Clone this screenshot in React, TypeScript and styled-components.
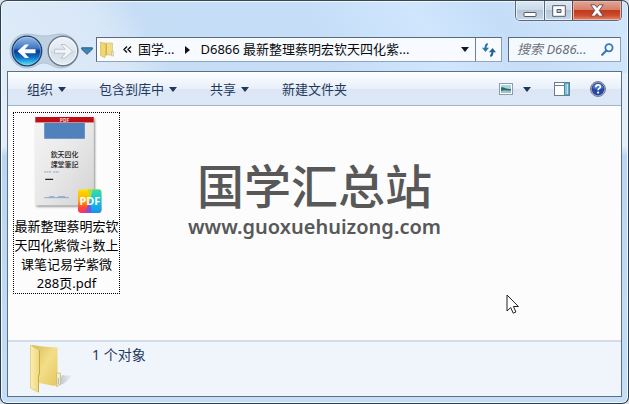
import React from "react";
import styled, { createGlobalStyle } from "styled-components";

const GlobalStyle = createGlobalStyle`
  *, *::before, *::after { box-sizing: border-box; }
  html, body { margin: 0; padding: 0; background: #dfe3e7; }
  body, button, input {
    font-family: "Noto Sans", "Noto Sans CJK SC", sans-serif;
    font-size: 13px;
    line-height: 19px;
  }
  button, input { margin: 0; padding: 0; border: 0; background: none; color: inherit; }
`;

const Window = styled.main`
  display: flex;
  flex-direction: column;
  min-height: 100vh;
  padding: 0 6px 6px;
  border: 1px solid #2c3e4c;
  border-top-color: #3c4650;
  border-radius: 7px;
  box-shadow: inset 0 0 0 1px #eff7ff;
  background:
    linear-gradient(60deg, #dfebf8 0, #d8e7f8 110px, #c6ddf6 150px, #c6ddf8 290px, #cfe6fd 390px, #c6ddf8 460px, #d0e6fc 560px, #cbe1f8 100%) top / 100% 72px no-repeat,
    linear-gradient(180deg, #dfebf7 0, #e3eef9 145px, #bad6f2 155px, #c5def6 100%);
  overflow: hidden;
`;

const TitleBar = styled.header`
  display: flex;
  justify-content: flex-end;
  height: 31px;
`;

const CaptionGroup = styled.div`
  display: flex;
  height: 20px;
  border: 1px solid #59697b;
  border-top: 0;
  border-radius: 0 0 5px 5px;
  overflow: hidden;
  box-shadow: 0 0 2px #ffffff;
`;

const CaptionButton = styled.button<{ $close?: boolean }>`
  display: flex;
  align-items: center;
  justify-content: center;
  width: ${(p) => (p.$close ? 49 : 28)}px;
  background: ${(p) =>
    p.$close
      ? "linear-gradient(180deg, #e5a593 0, #d7806b 45%, #bf3a1e 50%, #cb4a2c 75%, #e8886c 100%)"
      : "linear-gradient(180deg, #dce8f4 0, #cbdae9 45%, #b4c6d8 50%, #c5d8ea 100%)"};
  box-shadow: inset 0 0 0 1px ${(p) => (p.$close ? "#eab5a6" : "#e8f2fb")};
`;

const MiddleButton = styled(CaptionButton)`
  border-left: 1px solid #59697b;
`;

const CloseButton = styled(CaptionButton)`
  border-left: 1px solid #6b3f3f;
`;

const AddressRow = styled.nav`
  display: flex;
  align-items: center;
  height: 39px;
  padding: 0 1px 4px 2px;
`;

const NavCluster = styled.div`
  position: relative;
  display: flex;
  align-items: center;
  flex: none;
  gap: 2px;
  width: 87px;
  padding-top: 2px;
`;

const NavPlate = styled.svg`
  position: absolute;
  left: 0;
  top: 0;
`;

const NavButton = styled.button`
  position: relative;
  display: flex;
  width: 32px;
  height: 32px;
  margin-left: 2px;
`;

const RecentButton = styled.button`
  display: flex;
  width: 12px;
`;

const AddressBox = styled.div`
  display: flex;
  align-items: center;
  flex: 1;
  min-width: 0;
  height: 25px;
  border: 1px solid #6f8191;
  border-color: #596a7a #8d9eae #93a5b5 #596a7a;
  background: #f7fbff;
  color: #0a0a0a;
`;

const CrumbIcon = styled.span`
  display: flex;
  flex: none;
  width: 20px;
  padding-left: 3px;
`;

const Crumb = styled.button`
  white-space: nowrap;
`;

const CrumbArrow = styled.button<{ $wide?: boolean }>`
  display: flex;
  justify-content: center;
  flex: none;
  width: ${(p) => (p.$wide ? 26 : 21)}px;
`;

const AddressTools = styled.div`
  display: flex;
  align-self: stretch;
  flex: none;
  margin-left: auto;
`;

const AddressTool = styled.button<{ $divided?: boolean }>`
  display: flex;
  align-items: center;
  justify-content: center;
  width: ${(p) => (p.$divided ? 26 : 20)}px;
  border-left: ${(p) => (p.$divided ? "1px solid #6f8191" : "0")};
`;

const SearchBox = styled.form`
  display: flex;
  align-items: center;
  flex: none;
  width: 113px;
  height: 25px;
  margin-left: 6px;
  padding: 0 6px 0 8px;
  border: 1px solid #6f8191;
  border-color: #596a7a #8d9eae #93a5b5 #596a7a;
  background: #f3f9ff;
`;

const SearchInput = styled.input`
  flex: 1;
  min-width: 0;
  outline: none;
  &::placeholder { color: #6b6f74; opacity: 1; font-style: italic; }
`;

const SearchButton = styled.button`
  display: flex;
`;

const Client = styled.section`
  display: flex;
  flex-direction: column;
  flex: 1;
  border: 1px solid #5c7186;
  background: #fcfcfc;
`;

const Toolbar = styled.div`
  display: flex;
  align-items: center;
  gap: 33px;
  height: 34px;
  padding: 0 15px 0 19px;
  border-top: 1px solid #ffffff;
  border-bottom: 1px solid #a5b4c6;
  background: linear-gradient(180deg, #fbfdff 0, #e9f0fa 48%, #dce6f4 52%, #dde8f6 100%);
  color: #1e395b;
`;

const ToolButton = styled.button`
  display: flex;
  align-items: center;
  gap: 5px;
  white-space: nowrap;
`;

const ToolIcons = styled.div`
  display: flex;
  align-items: center;
  gap: 20px;
  margin-left: auto;
`;

const IconButton = styled.button`
  display: flex;
  align-items: center;
`;

const ViewButton = styled(IconButton)`
  gap: 10px;
  padding-right: 3px;
`;

const FileArea = styled.div`
  position: relative;
  flex: 1;
  padding: 6px 5px;
`;

const FileItem = styled.a`
  display: flex;
  flex-direction: column;
  align-items: center;
  width: 107px;
  height: 182px;
  padding-top: 3px;
  border: 1px dotted #000000;
  color: #000000;
  text-align: center;
  text-decoration: none;
`;

const FileName = styled.span`
  width: 105px;
  margin-top: 2px;
`;

const Watermark = styled.div`
  position: absolute;
  top: 54px;
  left: 0;
  right: 0;
  color: #585858;
  text-align: center;
  pointer-events: none;
`;

const WatermarkTitle = styled.div`
  font-family: "Noto Sans CJK SC", sans-serif;
  font-size: 47px;
  font-weight: 500;
  line-height: 47px;
`;

const WatermarkUrl = styled.div`
  margin-top: 8px;
  font-size: 20px;
  font-weight: 600;
  line-height: 24px;
`;

const Cursor = styled.svg`
  position: absolute;
  right: 101px;
  bottom: 24px;
  pointer-events: none;
`;

const Details = styled.footer`
  display: flex;
  gap: 18px;
  height: 56px;
  padding: 2px 20px;
  border-top: 2px solid #d3dde8;
  background: #f0f4fb;
  color: #1e395b;
`;

const DetailsText = styled.p`
  margin: 1px 0 0;
  font-size: 14px;
`;

const DownArrow = ({ color = "#1e395b" }: { color?: string }) => (
  <svg width="8" height="5" viewBox="0 0 8 5" aria-hidden="true">
    <path d="M0 0h8L4 5z" fill={color} />
  </svg>
);

const BackIcon = () => (
  <svg width="32" height="32" viewBox="0 0 32 32" aria-hidden="true">
    <defs>
      <linearGradient id="backTop" x1="0" y1="0" x2="0" y2="1">
        <stop offset="0" stopColor="#9dbde2" />
        <stop offset=".4" stopColor="#3f78c4" />
        <stop offset=".5" stopColor="#0a3a92" />
        <stop offset=".72" stopColor="#0b74c8" />
        <stop offset="1" stopColor="#5beafc" />
      </linearGradient>
    </defs>
    <circle cx="16" cy="16" r="14.8" fill="url(#backTop)" stroke="#21406d" strokeWidth="1.2" />
    <circle cx="16" cy="16" r="13.7" fill="none" stroke="#a6cff0" strokeOpacity=".5" />
    <path d="M6.5 16.3L14 9.5h4l-4.2 4.8h10.7v4H13.8l4.2 4.8h-4z" fill="#ffffff" />
  </svg>
);

const ForwardIcon = () => (
  <svg width="32" height="32" viewBox="0 0 32 32" aria-hidden="true">
    <defs>
      <linearGradient id="forwardFill" x1="0" y1="0" x2="0" y2="1">
        <stop offset="0" stopColor="#eef4fa" />
        <stop offset=".48" stopColor="#dfe7ef" />
        <stop offset=".52" stopColor="#d2dde7" />
        <stop offset="1" stopColor="#e6eef5" />
      </linearGradient>
    </defs>
    <circle cx="16" cy="16" r="14.8" fill="url(#forwardFill)" stroke="#6f7a88" strokeWidth="1.4" />
    <circle cx="16" cy="16" r="13.5" fill="none" stroke="#f3f7fa" />
    <path d="M25.5 16.3L18 9.5h-4l4.2 4.8H7.5v4h10.7L14 23.1h4z" fill="#f0f4f8" stroke="#b2bdc8" strokeWidth=".8" />
  </svg>
);

const SmallFolder = () => (
  <svg width="14" height="17" viewBox="0 0 14 17" aria-hidden="true">
    <path d="M4 2h8.5v12H4z" fill="#f1dc87" stroke="#d7ba5a" strokeWidth=".6" />
    <path d="M11.5 10.5H14V15h-2.5z" fill="#dfe6cf" stroke="#c5b562" strokeWidth=".5" />
    <path d="M.6 1l5.2 2v9l-1 4.6L.6 14.5z" fill="#f2d76e" stroke="#cfab42" strokeWidth=".6" />
    <path d="M6.5 3v11" stroke="#c9a842" strokeWidth=".8" />
  </svg>
);

const LargeFolder = () => (
  <svg width="46" height="50" viewBox="0 0 46 50" aria-hidden="true">
    <defs>
      <linearGradient id="folderBack" x1="0" y1="0" x2="1" y2="1">
        <stop offset="0" stopColor="#d9bb58" />
        <stop offset=".5" stopColor="#f3de88" />
        <stop offset="1" stopColor="#e6c75f" />
      </linearGradient>
      <linearGradient id="folderFront" x1="0" y1="0" x2="1" y2="0">
        <stop offset="0" stopColor="#fbeeb0" />
        <stop offset="1" stopColor="#efd67a" />
      </linearGradient>
      <linearGradient id="folderShade" x1="0" y1="0" x2="1" y2="0">
        <stop offset="0" stopColor="#7e8792" stopOpacity=".5" />
        <stop offset="1" stopColor="#7e8792" stopOpacity="0" />
      </linearGradient>
    </defs>
    <path d="M29 43l5-12c5 1 8 1 11-1-4 6-8 10-16 12z" fill="url(#folderShade)" />
    <path d="M4 1l11 1.5 14.5 1V40l-3 2L11 39z" fill="url(#folderBack)" />
    <path d="M28.5 29h4v11l-4 2.5z" fill="#f4edce" stroke="#c9b165" strokeWidth=".7" />
    <path d="M30.3 34v6" stroke="#8fb6c7" />
    <path d="M2.5 1l9 5.5V30l-1 2v16.3L2.5 44z" fill="url(#folderFront)" stroke="#d8ba60" strokeWidth=".6" />
    <path d="M11.5 6.5V30l-1 2v16" fill="none" stroke="#bfa044" strokeWidth=".8" />
  </svg>
);

const DocumentThumb = () => (
  <svg width="72" height="100" viewBox="0 0 72 100" role="img" aria-label="PDF">
    <defs>
      <linearGradient id="paper" x1="0" y1="0" x2="1" y2="1">
        <stop offset="0" stopColor="#f4f4f4" />
        <stop offset=".5" stopColor="#e8e8e8" />
        <stop offset="1" stopColor="#d2d2d2" />
      </linearGradient>
      <linearGradient id="badgeWarm" x1="0" y1="0" x2="0" y2="1">
        <stop offset="0" stopColor="#ffe000" />
        <stop offset=".45" stopColor="#ffae00" />
        <stop offset=".75" stopColor="#ff4b2e" />
        <stop offset="1" stopColor="#f0336a" />
      </linearGradient>
      <linearGradient id="badgeCool" x1="0" y1="0" x2="0" y2="1">
        <stop offset="0" stopColor="#3fdc9a" />
        <stop offset=".4" stopColor="#12c8e0" />
        <stop offset="1" stopColor="#1296f0" />
      </linearGradient>
      <filter id="paperShadow" x="-10%" y="-10%" width="125%" height="125%">
        <feDropShadow dx="1" dy="1.5" stdDeviation="1.2" floodColor="#000000" floodOpacity=".5" />
      </filter>
      <clipPath id="badgeClip">
        <rect x="47" y="74" width="24" height="24" rx="3.5" />
      </clipPath>
    </defs>
    <rect x="4" y="1" width="59" height="89" fill="url(#paper)" filter="url(#paperShadow)" />
    <rect x="4" y="1" width="59" height="5.5" fill="#bf0f14" />
    <text x="33.5" y="5.8" fontSize="5" fontWeight="700" fill="#f3d3d3" textAnchor="middle">PDF</text>
    <rect x="13" y="7" width="41" height="16" fill="#4f81bd" />
    <text x="33.5" y="41" fontSize="7" fontWeight="500" fill="#202020" textAnchor="middle">欽天四化</text>
    <text x="33.5" y="52" fontSize="7" fontWeight="500" fill="#202020" textAnchor="middle">課堂筆記</text>
    <path d="M13 56.5h7M22 56.5h6" stroke="#7fa4cf" strokeDasharray="2 .5" />
    <path d="M14 64h8" stroke="#252525" strokeWidth="1.3" />
    <path d="M13 82.5h25" stroke="#86a8cf" />
    <path d="M18 81.5h5M27 81.5h7" stroke="#648fc2" strokeWidth=".7" />
    <g clipPath="url(#badgeClip)">
      <rect x="47" y="74" width="24" height="24" fill="url(#badgeWarm)" />
      <path d="M61 74h10v24H58l1-12z" fill="url(#badgeCool)" />
      <path d="M54 98l5-12 2 12z" fill="#864fd8" />
      <path d="M57 74h5l-3 12z" fill="#b8e02a" />
    </g>
    <text x="59" y="90" fontSize="11" fontWeight="700" fill="#ffffff" textAnchor="middle">PDF</text>
  </svg>
);

export default function App() {
  return (
    <>
      <GlobalStyle />
      <Window>
        <TitleBar>
          <CaptionGroup>
            <CaptionButton type="button" aria-label="最小化">
              <svg width="14" height="14" viewBox="0 0 14 14">
                <rect x="1" y="8.5" width="12" height="4" rx=".5" fill="#ffffff" stroke="#505b68" />
              </svg>
            </CaptionButton>
            <MiddleButton type="button" aria-label="最大化">
              <svg width="14" height="12" viewBox="0 0 14 12">
                <path d="M.7.7h12.6v10.6H.7zM5 4.5v3h4v-3z" fill="#ffffff" fillRule="evenodd" stroke="#505b68" />
              </svg>
            </MiddleButton>
            <CloseButton type="button" $close aria-label="关闭">
              <svg width="14" height="13" viewBox="0 0 14 13">
                <path d="M.8.8h4L7 3.5 9.2.8h4L9.3 6.5l3.9 5.7h-4L7 9.5l-2.2 2.7h-4l3.9-5.7z" fill="#ffffff" stroke="#5d4a51" strokeWidth=".9" />
              </svg>
            </CloseButton>
          </CaptionGroup>
        </TitleBar>

        <AddressRow>
          <NavCluster>
            <NavPlate width="70" height="36" viewBox="0 0 70 36" aria-hidden="true">
              <path d="M18 1C7 1 1 9 1 18s7 17 17 17c8 0 11-5 17-5s9 5 17 5c10 0 17-8 17-17S62 1 52 1c-7 0-10 2-17 2S25 1 18 1z" fill="#bfd0e1" stroke="#a9bbcd" strokeWidth=".8" />
            </NavPlate>
            <NavButton type="button" aria-label="后退"><BackIcon /></NavButton>
            <NavButton type="button" aria-label="前进"><ForwardIcon /></NavButton>
            <RecentButton type="button" aria-label="最近的页面">
              <svg width="12" height="8" viewBox="0 0 12 8">
                <path d="M.7.8h10.6v1.4L6 7.3.7 2.2z" fill="#3f86b8" stroke="#23516f" strokeWidth=".9" />
              </svg>
            </RecentButton>
          </NavCluster>
          <AddressBox>
            <CrumbIcon><SmallFolder /></CrumbIcon>
            <CrumbArrow type="button" aria-label="上级文件夹">
              <svg width="9" height="7" viewBox="0 0 9 7">
                <path d="M4 .5L1 3.5l3 3M8 .5L5 3.5l3 3" fill="none" stroke="#111111" strokeWidth="1.4" />
              </svg>
            </CrumbArrow>
            <Crumb type="button">国学...</Crumb>
            <CrumbArrow type="button" $wide aria-label="子文件夹">
              <svg width="5" height="8" viewBox="0 0 5 8">
                <path d="M0 0v8l5-4z" fill="#111111" />
              </svg>
            </CrumbArrow>
            <Crumb type="button">D6866 最新整理蔡明宏钦天四化紫...</Crumb>
            <AddressTools>
              <AddressTool type="button" aria-label="以前的位置"><DownArrow color="#10162c" /></AddressTool>
              <AddressTool type="button" $divided aria-label="刷新">
                <svg width="14" height="14" viewBox="0 0 14 14">
                  <path d="M5.8 1C3.5 1.5 3.6 3.5 3.6 5" fill="none" stroke="#2b78a8" strokeWidth="2" />
                  <path d="M0 4.8h7L3.5 9z" fill="#2b78a8" />
                  <path d="M8.2 13C10.5 12.5 10.4 10.5 10.4 9" fill="none" stroke="#275f93" strokeWidth="2" />
                  <path d="M7 9.2h7L10.5 5z" fill="#275f93" />
                </svg>
              </AddressTool>
            </AddressTools>
          </AddressBox>
          <SearchBox role="search" onSubmit={(e) => e.preventDefault()}>
            <SearchInput type="text" aria-label="搜索" placeholder="搜索 D686..." />
            <SearchButton type="submit" aria-label="开始搜索">
              <svg width="13" height="13" viewBox="0 0 13 13">
                <circle cx="8" cy="4.8" r="3.6" fill="#f3f9ff" stroke="#3c78b4" strokeWidth="1.8" />
                <path d="M5.4 7.5L1.2 11.8" stroke="#3c78b4" strokeWidth="2.2" strokeLinecap="round" />
              </svg>
            </SearchButton>
          </SearchBox>
        </AddressRow>

        <Client>
          <Toolbar role="toolbar">
            <ToolButton type="button">组织<DownArrow /></ToolButton>
            <ToolButton type="button">包含到库中<DownArrow /></ToolButton>
            <ToolButton type="button">共享<DownArrow /></ToolButton>
            <ToolButton type="button">新建文件夹</ToolButton>
            <ToolIcons>
              <ViewButton type="button" aria-label="更改视图">
                <svg width="14" height="12" viewBox="0 0 14 12">
                  <rect x=".5" y=".5" width="13" height="11" fill="#ffffff" stroke="#8e9baa" />
                  <rect x="2" y="2" width="10" height="8" fill="#a9d3e6" />
                  <path d="M2 4.5c3-1 5 2 10 1.500V10H2z" fill="#2f6b66" />
                  <path d="M2 8c4-1.500 6 0 10-.5V10H2z" fill="#9cc4cf" />
                </svg>
                <DownArrow />
              </ViewButton>
              <IconButton type="button" aria-label="预览窗格">
                <svg width="16" height="14" viewBox="0 0 16 14">
                  <rect x=".5" y=".5" width="15" height="13" fill="#ffffff" stroke="#697b8d" />
                  <path d="M1 3.5h9" stroke="#697b8d" />
                  <rect x="10.5" y="1" width="4.5" height="12" fill="#7cc8dc" stroke="#50899f" />
                  <path d="M13.5 2v10" stroke="#b9e6ef" />
                </svg>
              </IconButton>
              <IconButton type="button" aria-label="帮助">
                <svg width="16" height="16" viewBox="0 0 16 16">
                  <circle cx="8" cy="8" r="7.5" fill="#cfd6e2" stroke="#717c91" />
                  <circle cx="8" cy="8" r="6.2" fill="#2448a8" stroke="#1b2f78" strokeWidth=".6" />
                  <path d="M2.5 7a5.6 5.6 0 0 1 11 0c-3 1.500-8 1.500-11 0z" fill="#5074c6" />
                  <path d="M5.8 6.2c0-3 4.6-3 4.6-.4 0 1.600-2.300 1.600-2.300 3.400" fill="none" stroke="#ffffff" strokeWidth="1.7" />
                  <circle cx="8.1" cy="11.6" r="1.1" fill="#ffffff" />
                </svg>
              </IconButton>
            </ToolIcons>
          </Toolbar>

          <FileArea>
            <FileItem href="#file">
              <DocumentThumb />
              <FileName>最新整理蔡明宏钦天四化紫微斗数上课笔记易学紫微288页.pdf</FileName>
            </FileItem>
            <Watermark>
              <WatermarkTitle>国学汇总站</WatermarkTitle>
              <WatermarkUrl>www.guoxuehuizong.com</WatermarkUrl>
            </Watermark>
            <Cursor width="14" height="22" viewBox="0 0 14 22" aria-hidden="true">
              <path d="M1 1v16l3.700-3.500 2.500 5.700 2.700-1.200-2.500-5.500h5z" fill="#ffffff" stroke="#20202c" />
            </Cursor>
          </FileArea>

          <Details>
            <LargeFolder />
            <DetailsText>1 个对象</DetailsText>
          </Details>
        </Client>
      </Window>
    </>
  );
}
